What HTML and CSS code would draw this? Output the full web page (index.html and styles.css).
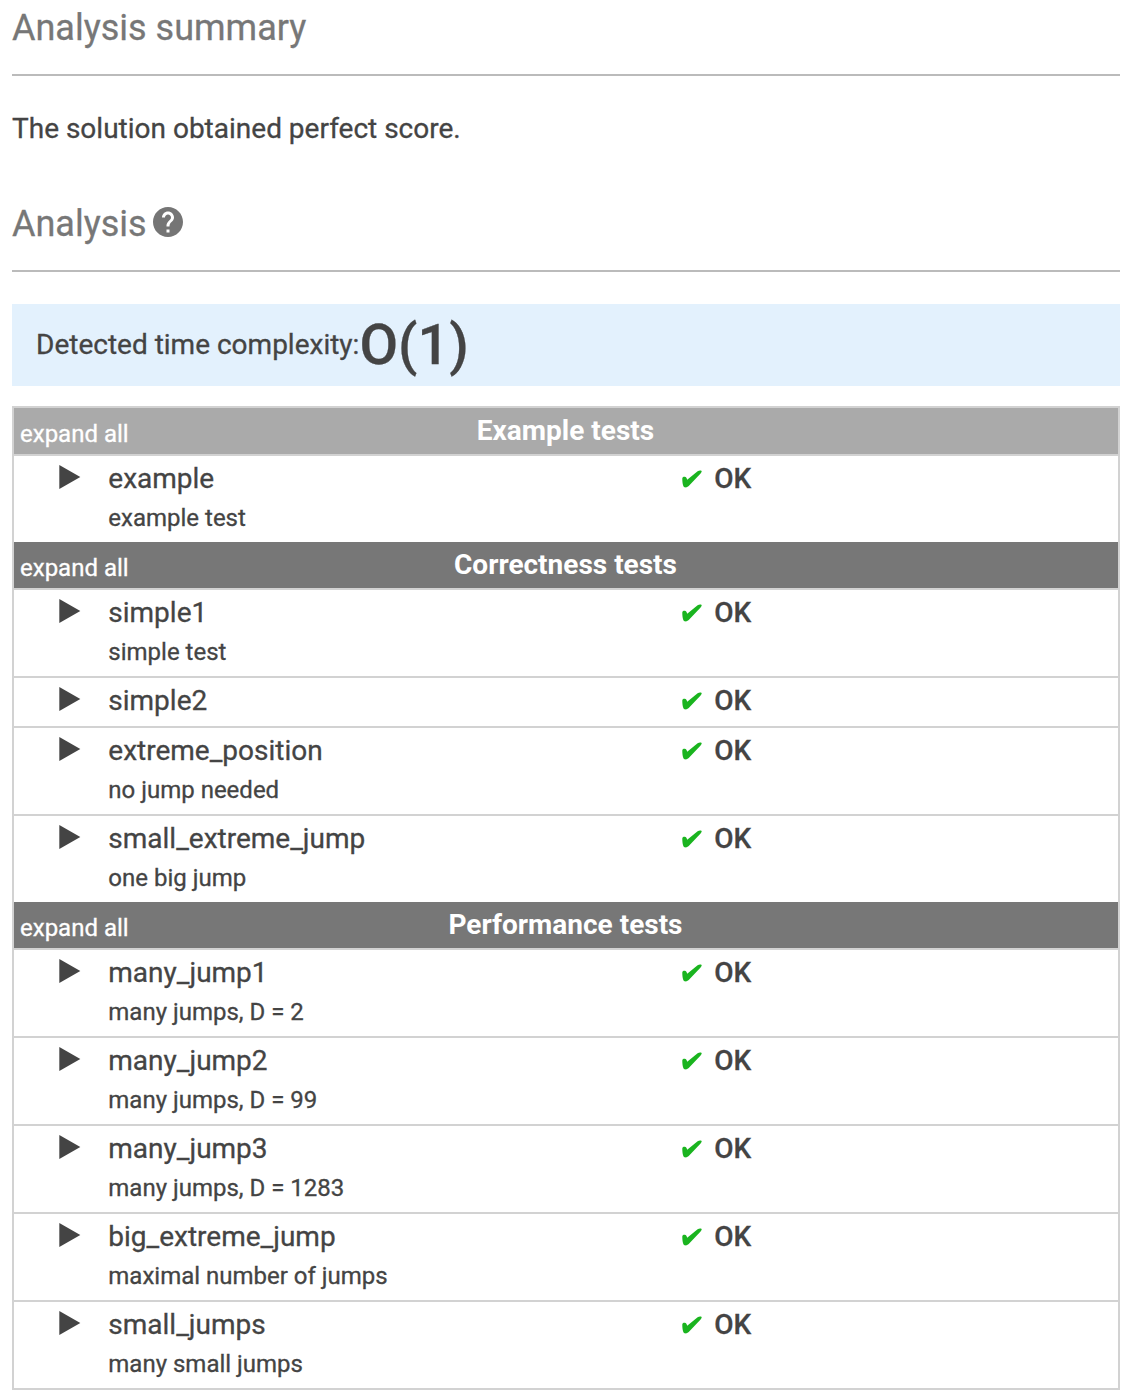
FILE: index.html
```html
<!DOCTYPE html>
<html lang="en">
<head>
<meta charset="utf-8">
<title>Analysis summary</title>
<link rel="stylesheet" href="styles.css">
</head>
<body>
<svg width="0" height="0" class="defs" aria-hidden="true">
  <symbol id="tri" viewBox="0 0 22 24"><path d="M0.3 0L21.3 12L0.3 24Z"/></symbol>
  <symbol id="check" viewBox="0 0 20 18"><path d="M0.3 8.4C0.3 7.1 1.4 6.6 2.7 6.7C4.2 6.9 4.9 8.1 5.2 9.7L15.6 1.3C17 0.3 18.6 0.1 19.4 0.8C20 1.5 19.6 2.4 18.6 3.4L7.2 15.6C6 17.1 4.2 17.7 2.7 17.3C0.8 16.7 0.3 12 0.3 8.4Z"/></symbol>
</svg>
<main class="report">
  <h2 class="heading">Analysis summary</h2>
  <p class="summary">The solution obtained perfect score.</p>
  <h2 class="heading">Analysis<svg class="help" viewBox="2 2 20 20"><path d="M12 2C6.48 2 2 6.48 2 12s4.48 10 10 10 10-4.48 10-10S17.52 2 12 2zm1 17h-2v-2h2v2zm2.07-7.75l-.9.92C13.45 12.9 13 13.5 13 15h-2v-.5c0-1.1.45-2.1 1.17-2.83l1.24-1.26c.37-.36.59-.86.59-1.41 0-1.1-.9-2-2-2s-2 .9-2 2H8c0-2.21 1.79-4 4-4s4 1.79 4 4c0 .88-.36 1.68-.93 2.25z"/></svg></h2>
  <div class="complexity"><span class="label">Detected time complexity:</span><strong class="value">O(1)</strong></div>
  <div class="tests">
    <section class="group example">
      <header class="bar"><span class="expand">expand all</span><h3 class="title">Example tests</h3></header>
      <div class="row"><svg class="tri"><use href="#tri"/></svg><div class="info"><div class="name">example</div><div class="desc">example test</div></div><div class="status"><svg class="check"><use href="#check"/></svg>OK</div></div>
    </section>
    <section class="group">
      <header class="bar"><span class="expand">expand all</span><h3 class="title">Correctness tests</h3></header>
      <div class="row"><svg class="tri"><use href="#tri"/></svg><div class="info"><div class="name">simple1</div><div class="desc">simple test</div></div><div class="status"><svg class="check"><use href="#check"/></svg>OK</div></div>
      <div class="row"><svg class="tri"><use href="#tri"/></svg><div class="info"><div class="name">simple2</div></div><div class="status"><svg class="check"><use href="#check"/></svg>OK</div></div>
      <div class="row"><svg class="tri"><use href="#tri"/></svg><div class="info"><div class="name">extreme_position</div><div class="desc">no jump needed</div></div><div class="status"><svg class="check"><use href="#check"/></svg>OK</div></div>
      <div class="row"><svg class="tri"><use href="#tri"/></svg><div class="info"><div class="name">small_extreme_jump</div><div class="desc">one big jump</div></div><div class="status"><svg class="check"><use href="#check"/></svg>OK</div></div>
    </section>
    <section class="group">
      <header class="bar"><span class="expand">expand all</span><h3 class="title">Performance tests</h3></header>
      <div class="row"><svg class="tri"><use href="#tri"/></svg><div class="info"><div class="name">many_jump1</div><div class="desc">many jumps, D = 2</div></div><div class="status"><svg class="check"><use href="#check"/></svg>OK</div></div>
      <div class="row"><svg class="tri"><use href="#tri"/></svg><div class="info"><div class="name">many_jump2</div><div class="desc">many jumps, D = 99</div></div><div class="status"><svg class="check"><use href="#check"/></svg>OK</div></div>
      <div class="row"><svg class="tri"><use href="#tri"/></svg><div class="info"><div class="name">many_jump3</div><div class="desc">many jumps, D = 1283</div></div><div class="status"><svg class="check"><use href="#check"/></svg>OK</div></div>
      <div class="row"><svg class="tri"><use href="#tri"/></svg><div class="info"><div class="name">big_extreme_jump</div><div class="desc">maximal number of jumps</div></div><div class="status"><svg class="check"><use href="#check"/></svg>OK</div></div>
      <div class="row"><svg class="tri"><use href="#tri"/></svg><div class="info"><div class="name">small_jumps</div><div class="desc">many small jumps</div></div><div class="status"><svg class="check"><use href="#check"/></svg>OK</div></div>
    </section>
  </div>
</main>
</body>
</html>
```
FILE: styles.css
```css
* { box-sizing: border-box; }
body {
  margin: 0;
  background: #fff;
  color: #444;
  font: 28px/45px Roboto, sans-serif;
  -webkit-text-stroke: 0.3px;
}
svg { -webkit-text-stroke: 0; }
.defs { display: block; }
.report { padding: 0 10px 10px 12px; }
.heading {
  display: flex;
  align-items: flex-start;
  margin: 0;
  height: 76px;
  border-bottom: 2px solid #bbb;
  color: #777;
  font-size: 36px;
  font-weight: 400;
  line-height: 56px;
}
.help {
  width: 30px;
  height: 30px;
  margin: 11px 0 0 6px;
  fill: #757575;
}
.summary { margin: 0; height: 120px; padding-top: 30px; }
.heading + .complexity { margin-top: 32px; }
.complexity {
  display: flex;
  height: 82px;
  padding-left: 24px;
  background: #e3f1fd;
  line-height: 82px;
}
.value { font-size: 56px; font-weight: 500; }
.tests { margin-top: 20px; border: 2px solid #d2d2d2; }
.bar {
  display: grid;
  grid-template-columns: 1fr auto 1fr;
  height: 48px;
  padding: 0 7px 0 6px;
  background: #777;
  border-bottom: 2px solid #d2d2d2;
  color: #fff;
}
.example .bar { background: #aaa; }
.expand { font-size: 24px; line-height: 52px; }
.title { margin: 0; font-size: 28px; font-weight: 700; -webkit-text-stroke: 0; }
.row {
  display: grid;
  grid-template-columns: 49.3px 572.7px 1fr;
  min-height: 48px;
  padding-left: 45px;
}
.row + .row { min-height: 50px; border-top: 2px solid #d2d2d2; }
.tri { width: 22px; height: 24px; margin-top: 9px; fill: #444; }
.desc { padding-bottom: 7px; font-size: 24px; line-height: 34px; box-sizing: content-box; }
.status { display: flex; font-weight: 500; }
.check { width: 20px; height: 18px; margin: 14px 12.3px 0 1px; fill: #1ab41f; }
```
